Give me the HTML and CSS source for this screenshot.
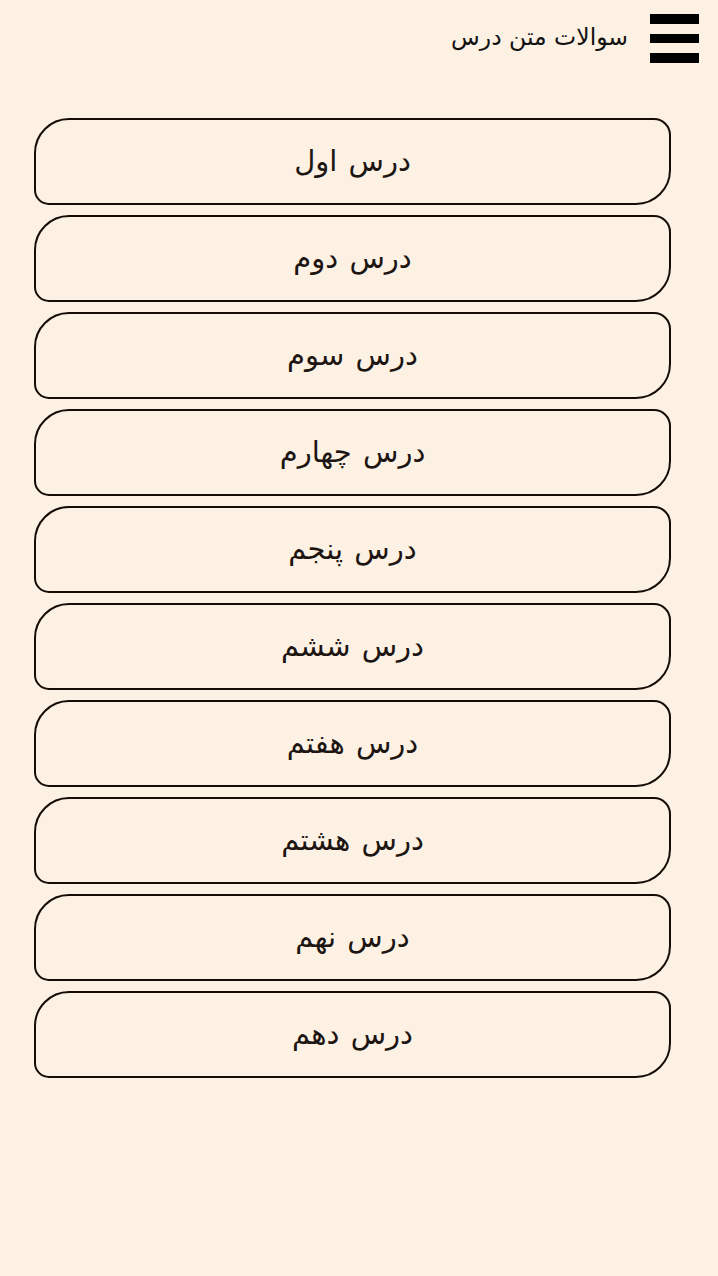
FILE: index.html
```html
<!DOCTYPE html>
<html lang="fa" dir="rtl">
<head>
<meta charset="utf-8">
<link rel="stylesheet" href="styles.css">
</head>
<body>
<header class="topbar">
  <div class="menu" aria-label="menu"><span></span><span></span><span></span></div>
  <h1 class="title">سوالات متن درس</h1>
</header>
<main class="list">
  <a class="lesson">درس اول</a>
  <a class="lesson">درس دوم</a>
  <a class="lesson">درس سوم</a>
  <a class="lesson">درس چهارم</a>
  <a class="lesson">درس پنجم</a>
  <a class="lesson">درس ششم</a>
  <a class="lesson">درس هفتم</a>
  <a class="lesson">درس هشتم</a>
  <a class="lesson">درس نهم</a>
  <a class="lesson">درس دهم</a>
</main>
</body>
</html>
```
FILE: styles.css
```css
html, body {
  margin: 0;
  padding: 0;
  background: #fdf1e4;
  font-family: "DejaVu Sans", sans-serif;
  color: #1c1512;
}
body {
  min-height: 1276px;
}
.topbar {
  display: flex;
  align-items: flex-start;
  gap: 22px;
  padding: 14px 19px 0 0;
  height: 118px;
  box-sizing: border-box;
}
.menu {
  display: flex;
  flex-direction: column;
  gap: 10px;
  width: 49px;
}
.menu span {
  display: block;
  height: 9.5px;
  background: #000;
}
.title {
  margin: 10px 0 0 0;
  font-size: 23.5px;
  font-weight: normal;
  line-height: 26px;
  color: #111;
}
.list {
  display: flex;
  flex-direction: column;
  gap: 10px;
  padding: 0 47px 0 34px;
}
.lesson {
  display: flex;
  align-items: center;
  justify-content: center;
  height: 87px;
  box-sizing: border-box;
  border: 2px solid #160c06;
  border-radius: 35px 17px 35px 15px;
  font-size: 29px;
  padding-bottom: 2px;
  word-spacing: 2px;
}
```
